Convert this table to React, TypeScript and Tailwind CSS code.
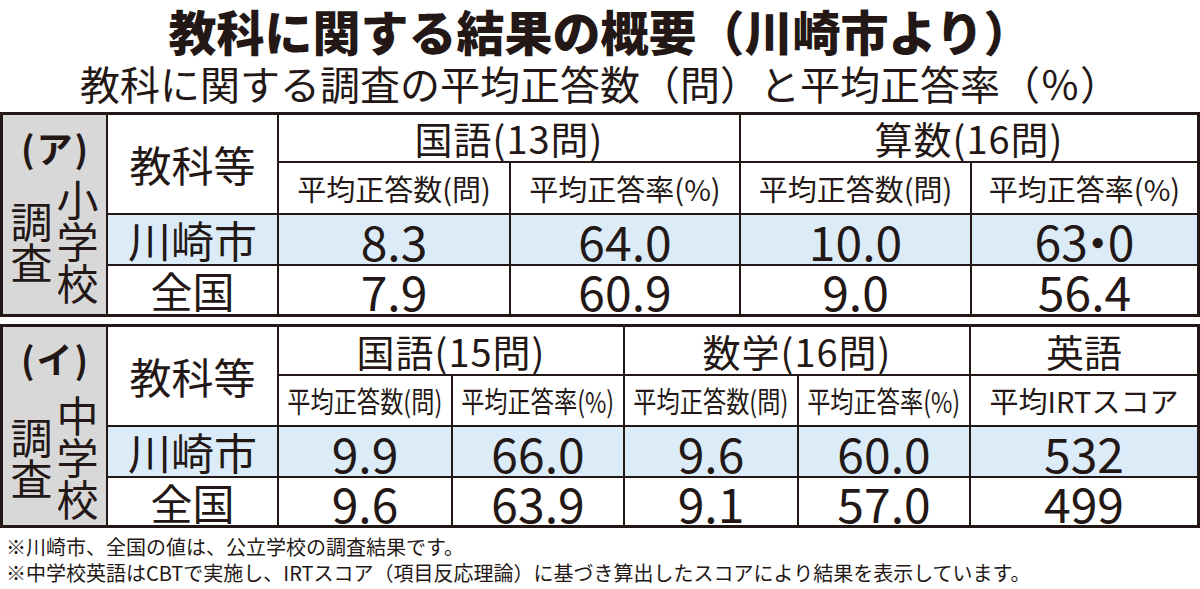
import React from "react";

const INK = "text-[#231815]";

function Cell({
  children,
  className = "",
}: {
  children?: React.ReactNode;
  className?: string;
}) {
  return (
    <div className={`flex items-center justify-center bg-white ${className}`}>
      {children}
    </div>
  );
}

function BlueCell({ children }: { children?: React.ReactNode }) {
  return (
    <div className="flex items-center justify-center bg-[#dbecf8]">{children}</div>
  );
}

function Num({ children }: { children: React.ReactNode }) {
  return <span className="text-[48px] leading-none whitespace-nowrap">{children}</span>;
}

function GrayLabel({
  mark,
  school,
  pt,
  gapTop,
}: {
  mark: string;
  school: string[];
  pt: string;
  gapTop: string;
}) {
  return (
    <div className={`row-span-4 bg-[#d8d8d8] flex flex-col items-center ${pt}`}>
      <div className="text-[36px] font-bold leading-[40px] tracking-[2px] pl-[2px] whitespace-nowrap">
        {mark}
      </div>
      <div className={`flex items-center gap-[4px] ${gapTop}`}>
        <div className="flex flex-col text-[42px] leading-[41px]">
          <span>調</span>
          <span>査</span>
        </div>
        <div className="flex flex-col text-[42px] leading-[42px]">
          {school.map((c) => (
            <span key={c}>{c}</span>
          ))}
        </div>
      </div>
    </div>
  );
}

function SubHead({ children, narrow = false }: { children: React.ReactNode; narrow?: boolean }) {
  return (
    <Cell>
      <span
        className={`text-[29px] leading-none whitespace-nowrap ${narrow ? "scale-x-[0.8] inline-block" : ""}`}
      >
        {children}
      </span>
    </Cell>
  );
}

export default function App() {
  return (
    <div
      className={`w-[1200px] h-[589px] bg-white overflow-hidden ${INK} font-['Noto_Sans_CJK_JP','Noto_Sans_CJK_SC',sans-serif]`}
    >
      <div className="h-[60px] flex items-center justify-center text-[48px] font-black leading-[56px] whitespace-nowrap">
        教科に関する結果の概要（川崎市より）
      </div>
      <div className="h-[45px] flex items-center justify-center text-[40px] font-normal leading-[44px] whitespace-nowrap">
        教科に関する調査の平均正答数（問）と平均正答率（％）
      </div>

      {/* Table A */}
      <div className="mt-[7px] grid grid-cols-[103px_169px_230px_228px_229px_225px] grid-rows-[46px_50px_49px_48px] gap-[2px] p-[3px] bg-[#231815]">
        <GrayLabel mark="(ア)" school={["小", "学", "校"]} pt="pt-[12px]" gapTop="mt-[10px]" />
        <Cell className="row-span-2">
          <span className="text-[42px] leading-none">教科等</span>
        </Cell>
        <Cell className="col-span-2">
          <span className="text-[38px] leading-none whitespace-nowrap tracking-[1px]">国語(13問)</span>
        </Cell>
        <Cell className="col-span-2">
          <span className="text-[38px] leading-none whitespace-nowrap tracking-[1px]">算数(16問)</span>
        </Cell>
        <SubHead>平均正答数(問)</SubHead>
        <SubHead>平均正答率(%)</SubHead>
        <SubHead>平均正答数(問)</SubHead>
        <SubHead>平均正答率(%)</SubHead>

        <BlueCell>
          <span className="text-[43px] leading-none">川崎市</span>
        </BlueCell>
        <BlueCell>
          <Num>8.3</Num>
        </BlueCell>
        <BlueCell>
          <Num>64.0</Num>
        </BlueCell>
        <BlueCell>
          <Num>10.0</Num>
        </BlueCell>
        <BlueCell>
          <Num>
            63<span className="mx-[-14px]">・</span>0
          </Num>
        </BlueCell>

        <Cell>
          <span className="text-[42px] leading-none">全国</span>
        </Cell>
        <Cell>
          <Num>7.9</Num>
        </Cell>
        <Cell>
          <Num>60.9</Num>
        </Cell>
        <Cell>
          <Num>9.0</Num>
        </Cell>
        <Cell>
          <Num>56.4</Num>
        </Cell>
      </div>

      {/* Table B */}
      <div className="mt-[7px] grid grid-cols-[103px_169px_172px_170px_172px_170px_226px] grid-rows-[47px_49px_49px_47px] gap-[2px] p-[3px] bg-[#231815]">
        <GrayLabel mark="(イ)" school={["中", "学", "校"]} pt="pt-[11px]" gapTop="mt-[15px]" />
        <Cell className="row-span-2">
          <span className="text-[42px] leading-none">教科等</span>
        </Cell>
        <Cell className="col-span-2">
          <span className="text-[38px] leading-none whitespace-nowrap tracking-[1px]">国語(15問)</span>
        </Cell>
        <Cell className="col-span-2">
          <span className="text-[38px] leading-none whitespace-nowrap tracking-[1px]">数学(16問)</span>
        </Cell>
        <Cell>
          <span className="text-[38px] leading-none">英語</span>
        </Cell>
        <SubHead narrow>平均正答数(問)</SubHead>
        <SubHead narrow>平均正答率(%)</SubHead>
        <SubHead narrow>平均正答数(問)</SubHead>
        <SubHead narrow>平均正答率(%)</SubHead>
        <SubHead>平均IRTスコア</SubHead>

        <BlueCell>
          <span className="text-[43px] leading-none">川崎市</span>
        </BlueCell>
        <BlueCell>
          <Num>9.9</Num>
        </BlueCell>
        <BlueCell>
          <Num>66.0</Num>
        </BlueCell>
        <BlueCell>
          <Num>9.6</Num>
        </BlueCell>
        <BlueCell>
          <Num>60.0</Num>
        </BlueCell>
        <BlueCell>
          <Num>532</Num>
        </BlueCell>

        <Cell>
          <span className="text-[42px] leading-none">全国</span>
        </Cell>
        <Cell>
          <Num>9.6</Num>
        </Cell>
        <Cell>
          <Num>63.9</Num>
        </Cell>
        <Cell>
          <Num>9.1</Num>
        </Cell>
        <Cell>
          <Num>57.0</Num>
        </Cell>
        <Cell>
          <Num>499</Num>
        </Cell>
      </div>

      <div className="mt-[6px] pl-[6px] text-[20px] leading-[26px] whitespace-nowrap">
        <p>※川崎市、全国の値は、公立学校の調査結果です。</p>
        <p>※中学校英語はCBTで実施し、IRTスコア（項目反応理論）に基づき算出したスコアにより結果を表示しています。</p>
      </div>
    </div>
  );
}
